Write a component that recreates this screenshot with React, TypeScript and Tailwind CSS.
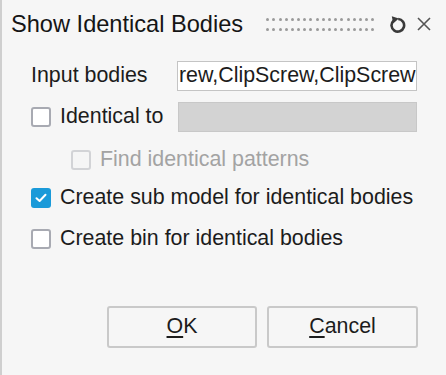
import React from 'react';

function Check({ checked = false, disabled = false }: { checked?: boolean; disabled?: boolean }) {
  if (checked) {
    return (
      <span className="flex h-[20px] w-[20px] shrink-0 items-center justify-center rounded-[3px] bg-[#1a9ad9]">
        <svg width="12" height="10" viewBox="0 0 12 10">
          <path d="M1.5 5.2 L4.6 8 L10.5 1.8" fill="none" stroke="#ffffff" strokeWidth="2" strokeLinecap="round" strokeLinejoin="round" />
        </svg>
      </span>
    );
  }
  return (
    <span
      className={
        disabled
          ? 'h-[20px] w-[20px] shrink-0 rounded-[3px] border-2 border-[#d2d3d6] bg-[#f5f5f5]'
          : 'h-[20px] w-[20px] shrink-0 rounded-[3px] border-2 border-[#a8aab2] bg-white'
      }
    />
  );
}

function GripDots() {
  const cols = Array.from({ length: 18 });
  return (
    <div className="flex flex-col gap-[7px]">
      {[0, 1].map((r) => (
        <div key={r} className="flex gap-[3.2px]">
          {cols.map((_, i) => (
            <span key={i} className="h-[3px] w-[3px] rounded-full bg-[#9a9a9a]" />
          ))}
        </div>
      ))}
    </div>
  );
}

export default function App() {
  return (
    <div
      className="h-[375px] w-[446px] overflow-hidden border-l-2 border-[#cfcfcf] bg-[#f6f6f6] text-[#1c1c1c]"
      style={{ fontFamily: '"Liberation Sans", Arial, sans-serif' }}
    >
      {/* header */}
      <div className="flex h-[38px] items-center pl-[9px] pt-[10px]">
        <span className="text-[23.6px] leading-[28px] text-[#151515]">Show Identical Bodies</span>
        <div className="ml-[23px]">
          <GripDots />
        </div>
        <svg className="ml-[14px]" width="18" height="19" viewBox="0 0 18 19">
          <path d="M5.6 5.6 A6.3 6.3 0 1 0 10.2 4" fill="none" stroke="#3a3a3a" strokeWidth="2.6" />
          <path d="M3.8 1.2 L10.8 3.6 L5.2 8.6 Z" fill="#3a3a3a" />
        </svg>
        <svg className="ml-[11px]" width="14" height="14" viewBox="0 0 14 14">
          <path d="M1 1 L13 13 M13 1 L1 13" stroke="#555555" strokeWidth="1.6" />
        </svg>
      </div>

      {/* form */}
      <div className="mt-[23px] flex flex-col pl-[29px] text-[21.4px]">
        <div className="flex h-[30px] items-center">
          <span className="w-[146px] leading-none">Input bodies</span>
          <div className="flex h-[30px] w-[240px] items-center overflow-hidden whitespace-nowrap border border-[#c4c4c4] bg-white pl-[1px]">
            <span className="leading-none">rew,ClipScrew,ClipScrew</span>
          </div>
        </div>

        <div className="mt-[11px] flex h-[30px] items-center">
          <div className="flex w-[147px] items-center gap-[9px]">
            <Check />
            <span className="leading-none">Identical to</span>
          </div>
          <div className="h-[30px] w-[239px] border border-[#c8c8c8] bg-[#d3d3d3]" />
        </div>

        <div className="mt-[13px] flex h-[30px] items-center gap-[9px] pl-[40px]">
          <Check disabled />
          <span className="leading-none text-[#a3a3a3]">Find identical patterns</span>
        </div>

        <div className="mt-[8px] flex h-[30px] items-center gap-[9px]">
          <Check checked />
          <span className="leading-none">Create sub model for identical bodies</span>
        </div>

        <div className="mt-[11px] flex h-[30px] items-center gap-[9px]">
          <Check />
          <span className="leading-none">Create bin for identical bodies</span>
        </div>
      </div>

      {/* buttons */}
      <div className="ml-[105px] mt-[52px] flex gap-[10px] text-[21.4px]">
        <button className="flex h-[42px] w-[150px] items-center justify-center rounded-[3px] border-2 border-[#c9c9c9] bg-[#f6f6f6]">
          <span className="leading-none">
            <span className="underline underline-offset-[3px]">O</span>K
          </span>
        </button>
        <button className="flex h-[42px] w-[151px] items-center justify-center rounded-[3px] border-2 border-[#c9c9c9] bg-[#f6f6f6]">
          <span className="leading-none">
            <span className="underline underline-offset-[3px]">C</span>ancel
          </span>
        </button>
      </div>
    </div>
  );
}
